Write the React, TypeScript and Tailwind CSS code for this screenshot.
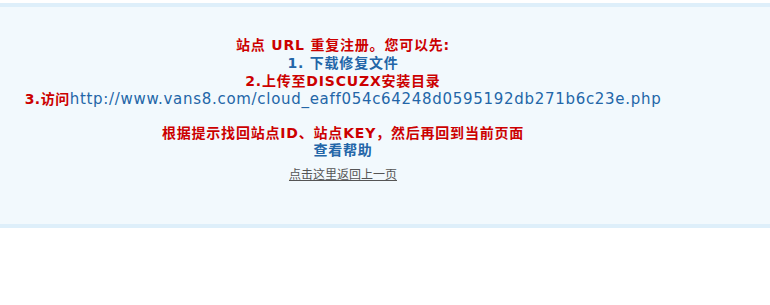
import React from "react";

const cjk = '"DejaVu Sans", "Noto Sans CJK SC", sans-serif';

export default function App() {
  return (
    <div className="w-[770px] h-[305px] bg-white pt-[3px]" style={{ fontFamily: cjk }}>
      <div className="border-t-4 border-b-4 border-[#DEEFFA] bg-[#F2F9FD] h-[225px]">
        <div className="w-[686px] text-center pt-[30px] font-bold text-[14px] tracking-[0.8px]">
          <div className="h-[17px] leading-[17px] text-[#cc0000]">站点 URL 重复注册。您可以先:</div>
          <div className="h-[18px] leading-[18px]">
            <a className="text-[#2366A8]">1. 下载修复文件</a>
          </div>
          <div className="h-[18px] leading-[18px] text-[#cc0000]">2.上传至DISCUZX安装目录</div>
          <div className="h-[19px] leading-[19px] whitespace-nowrap">
            <span className="text-[#cc0000] tracking-[0.5px]">3.访问</span>
            <a className="text-[#2366A8] font-normal text-[15px] tracking-[0.7px]">http://www.vans8.com/cloud_eaff054c64248d0595192db271b6c23e.php</a>
          </div>
          <div className="h-[16px]" />
          <div className="h-[17px] leading-[17px] text-[#cc0000]">根据提示找回站点ID、站点KEY，然后再回到当前页面</div>
          <div className="h-[17px] leading-[17px]">
            <a className="text-[#2366A8]">查看帮助</a>
          </div>
          <div className="mt-[9px] h-[14px] leading-[14px] font-normal text-[12px] tracking-normal">
            <a className="text-[#555555] underline">点击这里返回上一页</a>
          </div>
        </div>
      </div>
    </div>
  );
}
